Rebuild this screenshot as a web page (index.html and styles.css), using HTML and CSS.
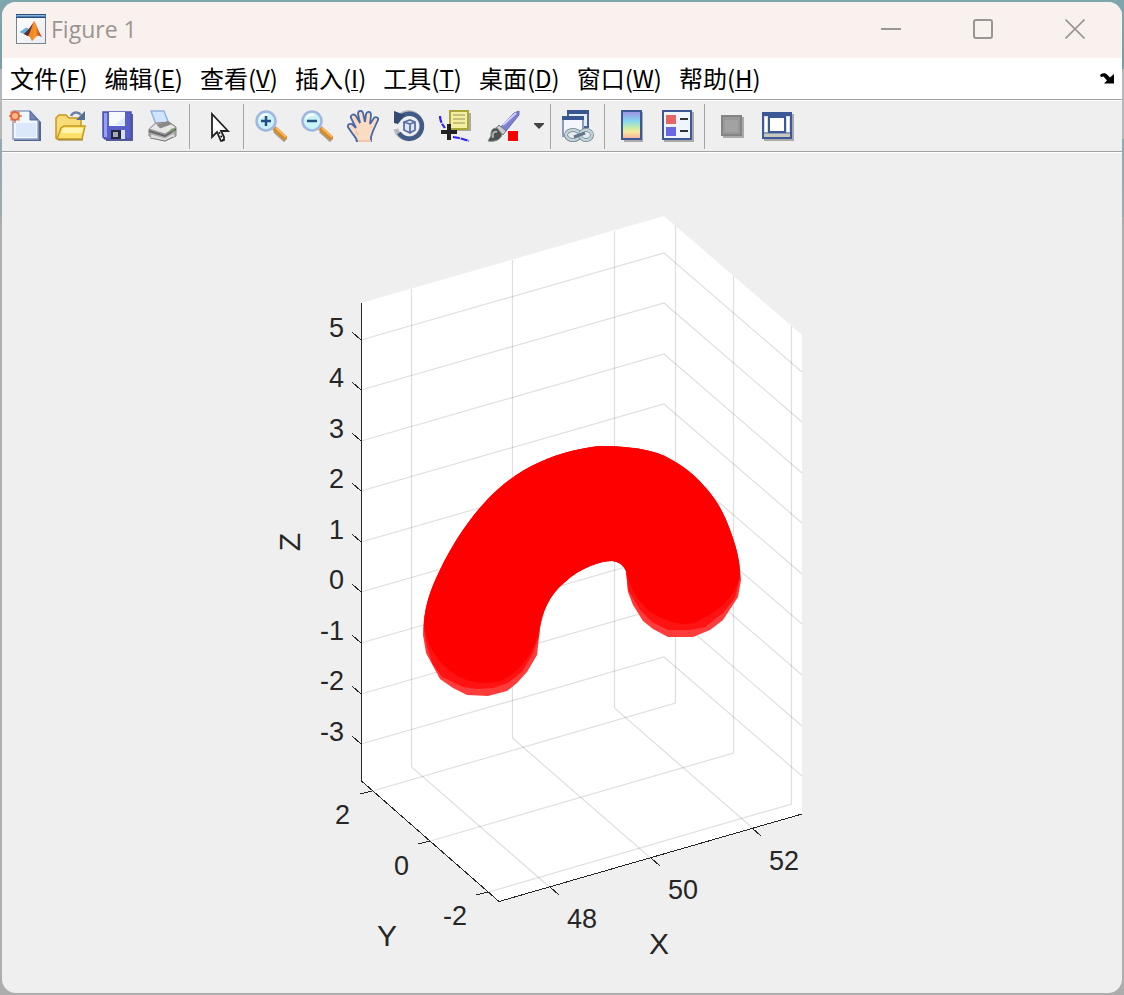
FILE: index.html
```html
<!DOCTYPE html>
<html lang="zh-CN">
<head>
    <meta charset="UTF-8">
    <meta name="viewport" content="width=device-width, initial-scale=1.0">
    <title>Figure 1</title>
    <link rel="stylesheet" href="styles.css">
</head>
<body>

    <div class="window">
        <!-- Title bar -->
        <header class="title-bar">
            <svg class="app-icon" viewBox="0 0 30 30" aria-hidden="true">
                <defs>
                    <linearGradient id="peak" x1="0" y1="0" x2="1" y2="0">
                        <stop offset="0" stop-color="#8c1a10"/>
                        <stop offset="0.4" stop-color="#f07818"/>
                        <stop offset="0.6" stop-color="#f9a030"/>
                        <stop offset="1" stop-color="#b81c08"/>
                    </linearGradient>
                    <linearGradient id="sheet" x1="0" y1="0" x2="1" y2="1">
                        <stop offset="0" stop-color="#fff"/>
                        <stop offset="1" stop-color="#e8ebf2"/>
                    </linearGradient>
                </defs>
                <rect x="0.5" y="0.5" width="29" height="29" fill="url(#sheet)" stroke="#7d838b"/>
                <rect x="0" y="0" width="30" height="4" fill="#4f83b8"/>
                <path d="M1 1.5h28" stroke="#8fb6dc"/>
                <path d="M0 .5h30M0 3.5h30" stroke="#2a4d7c"/>
                <path d="M4 18l6-4 3 1 3-4 2-3-2 8-4 6-3-2z" fill="#3979bd"/>
                <path d="M4 18l6-4 3 1-5 5z" fill="#69b5dd"/>
                <path d="M8 20l5-5 3-4 2-4c2 1 4 10 8 16-3-1-4-2-6 0l-4 4c-1-3-2-5-4-5z" fill="url(#peak)"/>
                <path d="M18 7c-1 5-3 9-6 14 2 0 3 3 4 6 2-4 3-12 2-20z" fill="#f28a22"/>
                <path d="M8 20l5-5 4-6-3 9-2 4z" fill="#5b3038"/>
            </svg>
            <h1>Figure 1</h1>
            <div class="window-buttons">
                <button type="button" aria-label="最小化">
                    <svg viewBox="0 0 20 20"><path d="M0 10h20" stroke-width="2"/></svg>
                </button>
                <button type="button" aria-label="最大化">
                    <svg viewBox="0 0 20 20"><rect x="1" y="1" width="18" height="18" rx="2" stroke-width="2"/></svg>
                </button>
                <button type="button" aria-label="关闭">
                    <svg viewBox="0 0 20 20"><path d="M0.500 0.500l19 19M19.500 0.500l-19 19" stroke-width="1.600"/></svg>
                </button>
            </div>
        </header>

        <!-- Menu bar -->
        <nav class="menu-bar">
            <button type="button">文件(<u>F</u>)</button>
            <button type="button">编辑(<u>E</u>)</button>
            <button type="button">查看(<u>V</u>)</button>
            <button type="button">插入(<u>I</u>)</button>
            <button type="button">工具(<u>T</u>)</button>
            <button type="button">桌面(<u>D</u>)</button>
            <button type="button">窗口(<u>W</u>)</button>
            <button type="button">帮助(<u>H</u>)</button>
            <button type="button" class="dock-button" aria-label="停靠">
                <svg viewBox="0 0 16 12"><path d="M1 4L1.500 2.500C4 .5 7 1 8.500 3l2.500 2.500L15 2v9.500H5L8 8.500 4.500 4.500 2.500 5z" fill="#000"/></svg>
            </button>
        </nav>

        <!-- Toolbar -->
        <div class="toolbar">
            <div class="tool-group">
                <button type="button" aria-label="新建图窗">
                    <svg viewBox="0 0 32 32">
                        <path d="M5 31V3h18l9 9v19z" fill="#55678f"/>
                        <path d="M4 1h17l8 9v19H4z" fill="#f2f6ff" stroke="#8fa2cc" stroke-width="1.500"/>
                        <path d="M7 13h20v14H7z" fill="#dbe8fb"/>
                        <path d="M21 1v9h8z" fill="#7386b4" stroke="#536695"/>
                        <path d="M6 0v13M0 6h13M1.500 1.500l9 9M10.500 1.500l-9 9" stroke="#e39a78" stroke-width="2"/>
                        <circle cx="6" cy="6" r="4" fill="#ffb58a" stroke="#dc683c" stroke-width="2"/>
                    </svg>
                </button>
                <button type="button" aria-label="打开文件">
                    <svg viewBox="0 0 32 32">
                        <path d="M1 28V8l3-3h7l3 3h12v20z" fill="#f7dc79" stroke="#c8981c" stroke-width="1.500"/>
                        <path d="M2 29l4-11 3-2h21l-3 13z" fill="#ffe06c" stroke="#c8981c" stroke-width="1.500"/>
                        <path d="M6 23l2-5h20l-1 5z" fill="#fff4af"/>
                        <path d="M3 30h25" stroke="#96711b"/>
                        <path d="M16 6c2-4 7-5 10-1" fill="none" stroke="#6a83a5" stroke-width="2.500"/>
                        <path d="M30 1v9h-9z" fill="#566f94"/>
                    </svg>
                </button>
                <button type="button" aria-label="保存图窗">
                    <svg viewBox="0 0 32 32">
                        <path d="M5 4h27v27H5z" fill="#555e8c"/>
                        <path d="M2 2h28v26l-2 1H4l-2-2z" fill="#5860c9" stroke="#4c53b4" stroke-width="1.500"/>
                        <path d="M3 3h3v24H3z" fill="#989ff0"/>
                        <rect x="8" y="2" width="16" height="14" fill="#f6faff"/>
                        <path d="M13 15h11V7z" fill="#dceafa"/>
                        <rect x="10" y="20" width="14" height="9" fill="#24273d"/>
                        <rect x="12" y="22" width="5" height="5" fill="#a5abb6"/>
                        <rect x="20" y="20" width="4" height="9" fill="#d8deec"/>
                    </svg>
                </button>
                <button type="button" aria-label="打印图窗">
                    <svg viewBox="0 0 32 32">
                        <path d="M4 1h13l5 13-12 3z" fill="#cfe4ff" stroke="#94b2df" stroke-width="1.500"/>
                        <path d="M2 19l7-6 13-1 7 5v9l-11 5-16-5z" fill="#aaa" stroke="#888"/>
                        <path d="M2 19l7-6 4 5 11-4 5 3-11 7z" fill="#e6e6e6" stroke="#969696"/>
                        <path d="M10 15l11-4 3 3-10 4z" fill="#888"/>
                        <path d="M2 21l16 5 11-7" fill="none" stroke="#666" stroke-width="2"/>
                        <path d="M4 26l14 4 9-5" fill="none" stroke="#ddd" stroke-width="3"/>
                        <path d="M3 28l15 3 8-4" fill="none" stroke="#777"/>
                        <circle cx="25" cy="20" r="1.500" fill="#72aa4c"/>
                    </svg>
                </button>
            </div>
            <div class="tool-group">
                <button type="button" aria-label="编辑绘图">
                    <svg viewBox="0 0 32 32">
                        <path d="M11 4v23l5-5 4 9 3-1v-3l-3-6h7z" fill="#fff" stroke="#222" stroke-width="1.800"/>
                        <path d="M18 22l4 8" stroke="#111" stroke-width="1.500" stroke-dasharray="2 2"/>
                    </svg>
                </button>
            </div>
            <div class="tool-group">
                <button type="button" aria-label="放大">
                    <svg viewBox="0 0 32 32">
                        <path d="M20 20l11 10" stroke="#a0a0a0" stroke-width="6"/>
                        <path d="M19 18l12 11" stroke="#d88a25" stroke-width="5"/>
                        <path d="M21 18l10 9" stroke="#f7b65a" stroke-width="2"/>
                        <circle cx="11" cy="11" r="9.500" fill="#c8f3f7" stroke="#9fb6e2" stroke-width="2.500"/>
                        <path d="M5 9c1-4 5-5 8-4" fill="none" stroke="#fff" stroke-width="2"/>
                        <path d="M11 6v10M6 11h10" stroke="#244f84" stroke-width="2.500"/>
                    </svg>
                </button>
                <button type="button" aria-label="缩小">
                    <svg viewBox="0 0 32 32">
                        <path d="M20 20l11 10" stroke="#a0a0a0" stroke-width="6"/>
                        <path d="M19 18l12 11" stroke="#d88a25" stroke-width="5"/>
                        <path d="M21 18l10 9" stroke="#f7b65a" stroke-width="2"/>
                        <circle cx="11" cy="11" r="9.500" fill="#c8f3f7" stroke="#9fb6e2" stroke-width="2.500"/>
                        <path d="M5 9c1-4 5-5 8-4" fill="none" stroke="#fff" stroke-width="2"/>
                        <path d="M6 11h10" stroke="#244f84" stroke-width="2.500"/>
                    </svg>
                </button>
                <button type="button" aria-label="平移">
                    <svg viewBox="0 0 32 32">
                        <path d="M10 32c0-4-3-6-5-9l-4-6c-1-3 3-4 5-2l3 3-5-10c-1-3 3-5 5-2l4 7-2-9c0-4 4-4 5-1l2 9 1-8c1-3 5-3 5 1l-1 9 4-6c2-2 5 0 4 2l-5 11-2 6v5z" fill="#fbdcc2" stroke="#4568aa" stroke-width="1.800"/>
                        <path d="M9 21l2 4M11 31h13" stroke="#f0c8a8" stroke-width="2"/>
                    </svg>
                </button>
                <button type="button" aria-label="三维旋转">
                    <svg viewBox="0 0 32 32">
                        <path d="M3 19a13 13 0 1 0 3-12" fill="none" stroke="#b5b8bd" stroke-width="5"/>
                        <path d="M6 23a12.500 12.500 0 1 0 1-15" fill="none" stroke="#425a88" stroke-width="4.500"/>
                        <path d="M1 1l11 4-7 9-4-1z" fill="#344a75"/>
                        <path d="M11 12l6-2 5 2v8l-5 3-6-3zM11 12l6 2 5-2M17 14v8" fill="#e0e8f5" stroke="#5870a4" stroke-width="1.800"/>
                    </svg>
                </button>
                <button type="button" aria-label="数据游标">
                    <svg viewBox="0 0 32 32">
                        <path d="M13 3h19v18H13z" fill="#aaa"/>
                        <rect x="11" y="1" width="18" height="18" fill="#f4efa0" stroke="#aaa537" stroke-width="2"/>
                        <path d="M14 5h12M14 9h12M14 13h12" stroke="#b5ae70" stroke-width="1.500"/>
                        <path d="M1 6c0 6 3 9 5 12M14 27l6 1 10 3" fill="none" stroke="#3022f0" stroke-width="2.200" stroke-dasharray="7 1"/>
                        <path d="M10 14v16M2 22h16" stroke="#222" stroke-width="4"/>
                    </svg>
                </button>
                <button type="button" class="brush-button" aria-label="刷亮数据">
                    <svg viewBox="0 0 36 32">
                        <path d="M15 18L29 3l5-2v4L21 21z" fill="#7c80cf" stroke="#666baa"/>
                        <path d="M18 15L31 3" stroke="#cfd1ff" stroke-width="2"/>
                        <path d="M14 15l7 6-3 4-7-7z" fill="#c8ccd2" stroke="#777"/>
                        <path d="M12 18c-6 0-6 4-6 8l-3 5c7 1 13-1 14-7z" fill="#4b514e" stroke="#808680"/>
                        <path d="M8 28c-1-5 1-7 4-6" fill="none" stroke="#aab2ae" stroke-width="2"/>
                        <rect x="22" y="20" width="12" height="12" fill="#fff"/>
                        <rect x="23" y="21" width="10" height="10" fill="#f00"/>
                    </svg>
                </button>
                <button type="button" class="arrow-button" aria-label="刷亮颜色">
                    <svg viewBox="0 0 10 6"><path d="M0 0h10v1L5 6 0 1z" fill="#444"/></svg>
                </button>
            </div>
            <div class="tool-group">
                <button type="button" aria-label="链接绘图">
                    <svg viewBox="0 0 32 32">
                        <rect x="6" y="1" width="20" height="16" fill="#e6edf8" stroke="#48639a" stroke-width="2"/>
                        <path d="M5 2h22" stroke="#38568f" stroke-width="4"/>
                        <rect x="1" y="7" width="20" height="19" fill="#f3f6fc" stroke="#8b9cc0" stroke-width="2"/>
                        <path d="M0 8h22" stroke="#38568f" stroke-width="4"/>
                        <ellipse cx="11" cy="25" rx="7" ry="5" fill="#e4ebf0" stroke="#71838e" stroke-width="4"/>
                        <ellipse cx="11" cy="25" rx="7" ry="5" fill="none" stroke="#c3d3dc" stroke-width="2.500"/>
                        <ellipse cx="24" cy="25" rx="6" ry="5" fill="#e4ebf0" stroke="#71838e" stroke-width="4"/>
                        <ellipse cx="24" cy="25" rx="6" ry="5" fill="none" stroke="#c3d3dc" stroke-width="2.500"/>
                        <path d="M12 27l11-4" stroke="#64758a" stroke-width="3"/>
                    </svg>
                </button>
            </div>
            <div class="tool-group">
                <button type="button" aria-label="插入颜色栏">
                    <svg viewBox="0 0 32 32">
                        <defs>
                            <linearGradient id="rainbow" x1="0" y1="0" x2="0" y2="1">
                                <stop offset="0" stop-color="#a08ce0"/>
                                <stop offset="0.350" stop-color="#84d6ef"/>
                                <stop offset="0.600" stop-color="#c6edaa"/>
                                <stop offset="0.750" stop-color="#fbe79c"/>
                                <stop offset="1" stop-color="#f7aa9e"/>
                            </linearGradient>
                        </defs>
                        <path d="M8 2h19v30H8z" fill="#aaa"/>
                        <rect x="6" y="1" width="19" height="28" fill="url(#rainbow)" stroke="#3c5896" stroke-width="2"/>
                    </svg>
                </button>
                <button type="button" aria-label="插入图例">
                    <svg viewBox="0 0 32 32">
                        <path d="M2 2h30v30H2z" fill="#aaa"/>
                        <rect x="1" y="1" width="28" height="28" fill="#f0f4ff" stroke="#3c5896" stroke-width="2"/>
                        <rect x="4" y="5" width="10" height="9" fill="#e56565"/>
                        <rect x="4" y="17" width="10" height="9" fill="#6868e5"/>
                        <path d="M18 9h8M18 21h8" stroke="#333" stroke-width="2"/>
                    </svg>
                </button>
            </div>
            <div class="tool-group">
                <button type="button" aria-label="隐藏绘图工具">
                    <svg viewBox="0 0 32 32">
                        <path d="M7 7h21v21H7z" fill="#aaa"/>
                        <rect x="6" y="6" width="19" height="19" fill="#989898" stroke="#848484" stroke-width="2"/>
                        <path d="M9 10h13v12H9z" fill="#a2a2a2"/>
                    </svg>
                </button>
                <button type="button" aria-label="显示绘图工具和停靠图窗">
                    <svg viewBox="0 0 32 32">
                        <path d="M2 4h30v27H2z" fill="#aaa"/>
                        <rect x="1" y="3" width="28" height="25" fill="#d8dce2" stroke="#3c5896" stroke-width="2"/>
                        <path d="M0 4h30" stroke="#3c5896" stroke-width="4"/>
                        <rect x="7" y="7" width="16" height="15" fill="#fff" stroke="#3c5896" stroke-width="2"/>
                        <path d="M2 24h26v3H2z" fill="#c8c7bb"/>
                        <path d="M4 7v15M26 7v15" stroke="#fff" stroke-width="2"/>
                        <path d="M2 23h26" stroke="#3c5896"/>
                    </svg>
                </button>
            </div>
        </div>

        <!-- 3D axes -->
        <main class="figure">
            <svg class="axes" viewBox="2 153 1120 840" role="img" aria-label="三维曲面">
                <path class="wall" d="M361 303L664 216 802 335V814L499 901 361 781z"/>

                <g class="grid">
                    <!-- Z lines on both walls -->
                    <path d="M361 340L664 253 802 372"/>
                    <path d="M361 390L664 303 802 422"/>
                    <path d="M361 441L664 354 802 473"/>
                    <path d="M361 491L664 404 802 523"/>
                    <path d="M361 542L664 455 802 574"/>
                    <path d="M361 592L664 505 802 624"/>
                    <path d="M361 643L664 556 802 675"/>
                    <path d="M361 694L664 607 802 726"/>
                    <path d="M361 744L664 657 802 776"/>
                    <!-- X lines -->
                    <path d="M411.500 289V767L549.500 887"/>
                    <path d="M512.500 260V738L650.500 858"/>
                    <path d="M614.500 231V708L752.500 828"/>
                    <!-- Y lines -->
                    <path d="M675.500 226V703L372.500 791"/>
                    <path d="M733.500 276V753L430.500 841"/>
                    <path d="M791.500 326V804L488.500 892"/>
                </g>

                <g class="rulers">
                    <path d="M361.500 303V781L499 901.500 802 814"/>
                    <path d="M361 340l-9-8M361 390l-9-8M361 441l-9-8M361 491l-9-8M361 542l-9-8M361 592l-9-8M361 643l-9-8M361 694l-9-8M361 744l-9-8"/>
                    <path d="M372 791l-12 3M430 841l-12 3M488 892l-12 3"/>
                    <path d="M550 887l9 8M651 858l9 8M752 828l9 8"/>
                </g>

                <!-- Tube, open ends drawn in lighter rings -->
                <g class="surface">
                    <path class="surface-edge" d="M423 635C423 610 430 590 440 570C452 545 468 520 487 500C503 483 520 471 540 462C560 453 583 447 603 446C622 446 640 448 657 453C676 460 692 472 705 487C716 499 724 513 730 530C736 546 740 562 741 580L738 597 723 620 710 630 693 637H668L653 629 643 621 633 605 628 592 626 571C624 566 620 562 612 561C600 561 580 568 565 582C550 594 541 612 539 637L537 655 527 672 517 683 507 691 488 696 467 695 453 688 440 679 426 653z"/>
                    <path class="surface-rim" d="M424 630C424 608 430 590 440 570C452 545 468 520 487 500C503 483 520 471 540 462C560 453 583 447 603 446C622 446 640 448 657 453C676 460 692 472 705 487C716 499 724 513 730 530C736 546 740 560 740 578L735 598 723 613 705 627 690 630H668L652 622 640 610 628 590 626 571C624 566 620 562 612 561C600 561 580 568 565 582C550 594 541 612 539 636L533 653 522 672 508 683 493 688 477 689 463 687 442 677 432 663 426 643z"/>
                    <path class="surface-body" d="M424 623C425 605 431 588 440 570C452 545 468 520 487 500C503 483 520 471 540 462C560 453 583 447 603 446C622 446 640 448 657 453C676 460 692 472 705 487C716 499 724 513 730 530C736 546 740 560 740 574C737 592 724 608 705 617C697 622 692 624 686 624C674 624 662 619 652 613C641 605 630 590 626 571C624 566 620 562 612 561C600 561 580 568 565 582C550 594 541 612 538 634C534 652 518 675 500 681C490 684 474 684 462 678C442 669 426 648 424 623z"/>
                </g>

                <g class="tick-labels">
                    <text x="344" y="337">5</text>
                    <text x="344" y="387">4</text>
                    <text x="344" y="438">3</text>
                    <text x="344" y="488">2</text>
                    <text x="344" y="539">1</text>
                    <text x="344" y="589">0</text>
                    <text x="344" y="640">-1</text>
                    <text x="344" y="690">-2</text>
                    <text x="344" y="741">-3</text>
                    <text x="350" y="824">2</text>
                    <text x="409" y="875">0</text>
                    <text x="467" y="925">-2</text>
                    <text x="597" y="928">48</text>
                    <text x="698" y="899">50</text>
                    <text x="799" y="870">52</text>
                </g>
                <g class="axis-labels">
                    <text x="387" y="946">Y</text>
                    <text x="659" y="954">X</text>
                    <text transform="translate(300 542) rotate(-90)">Z</text>
                </g>
            </svg>
        </main>
    </div>

</body>
</html>
```
FILE: styles.css
```css
* {
    box-sizing: border-box;
}

html, body {
    height: 100%;
    margin: 0;
}

body {
    padding: 2px;
    overflow: hidden;
    background: linear-gradient(#80a6ad 0, #7b9da5 69px, #b5b8b8 69px, #b5b8b8 139px, #93a9ae 139px, #9caaac 217px, #adadad 217px, #adadad 100%);
}

button {
    padding: 0;
    border: 0;
    background: none;
    color: inherit;
    font: inherit;
}

svg {
    display: block;
}

.window {
    display: flex;
    flex-direction: column;
    height: 100%;
    overflow: hidden;
    border-radius: 14px;
    background-color: #efefef;
}

/* Title bar */
.title-bar {
    display: flex;
    align-items: center;
    height: 56px;
    padding: 0 1px 2px 14px;
    background-color: #f9f1ee;
    color: #999592;
}

.app-icon {
    width: 30px;
    height: 30px;
}

.title-bar h1 {
    margin: 0 0 0 5px;
    font-family: "Open Sans", "Noto Sans", sans-serif;
    font-size: 23px;
    font-weight: 400;
    line-height: 30px;
}

.window-buttons {
    display: flex;
    align-self: stretch;
    margin-left: auto;
}

.window-buttons button {
    display: flex;
    align-items: center;
    justify-content: center;
    width: 92px;
}

.window-buttons svg {
    width: 20px;
    height: 20px;
    fill: none;
    stroke: #999592;
}

/* Menu bar */
.menu-bar {
    display: flex;
    align-items: center;
    gap: 17px;
    height: 42px;
    padding: 0 7px 2px 8px;
    border-bottom: 1px solid #a0a3a0;
    background-color: #fff;
    color: #000;
    font-family: "Noto Sans CJK SC", sans-serif;
    font-size: 24px;
    line-height: 36px;
}

.menu-bar u {
    text-decoration-thickness: 1px;
    text-underline-offset: 2px;
}

.dock-button {
    margin-left: auto;
}

.dock-button svg {
    width: 16px;
    height: 12px;
}

/* Toolbar */
.toolbar {
    display: flex;
    height: 52px;
    padding: 3px 0 2px;
    border-top: 1px solid #fff;
    border-bottom: 1px solid #a0a3a0;
    background-color: #efefef;
}

.tool-group {
    display: flex;
    align-items: center;
    gap: 14px;
    padding: 0 10px 2px 11px;
    border-right: 1px solid #a3a3a3;
}

.tool-group:first-child {
    padding-left: 7px;
}

.tool-group:last-child {
    border-right: 0;
}

.tool-group svg {
    width: 32px;
    height: 32px;
}

.tool-group .brush-button svg {
    width: 36px;
}

.arrow-button {
    margin: 0 -4px 0 -1px;
}

.tool-group .arrow-button svg {
    width: 10px;
    height: 6px;
}

/* Figure */
.figure {
    flex: 1;
    min-height: 0;
    border-top: 1px solid #fff;
}

.axes {
    width: 100%;
    height: 100%;
}

.wall {
    fill: #fff;
}

.grid path {
    fill: none;
    stroke: #262626;
    stroke-opacity: 0.15;
    stroke-width: 1.2px;
}

.rulers path {
    fill: none;
    stroke: #262626;
    shape-rendering: crispEdges;
}

.surface-edge {
    fill: #ff3c3c;
}

.surface-rim {
    fill: #ff1212;
}

.surface-body {
    fill: #f00;
}

.tick-labels,
.axis-labels {
    fill: #262626;
    font-family: "Liberation Sans", Arial, sans-serif;
}

.tick-labels {
    font-size: 27px;
    text-anchor: end;
}

.axis-labels {
    font-size: 30px;
    text-anchor: middle;
}
```
